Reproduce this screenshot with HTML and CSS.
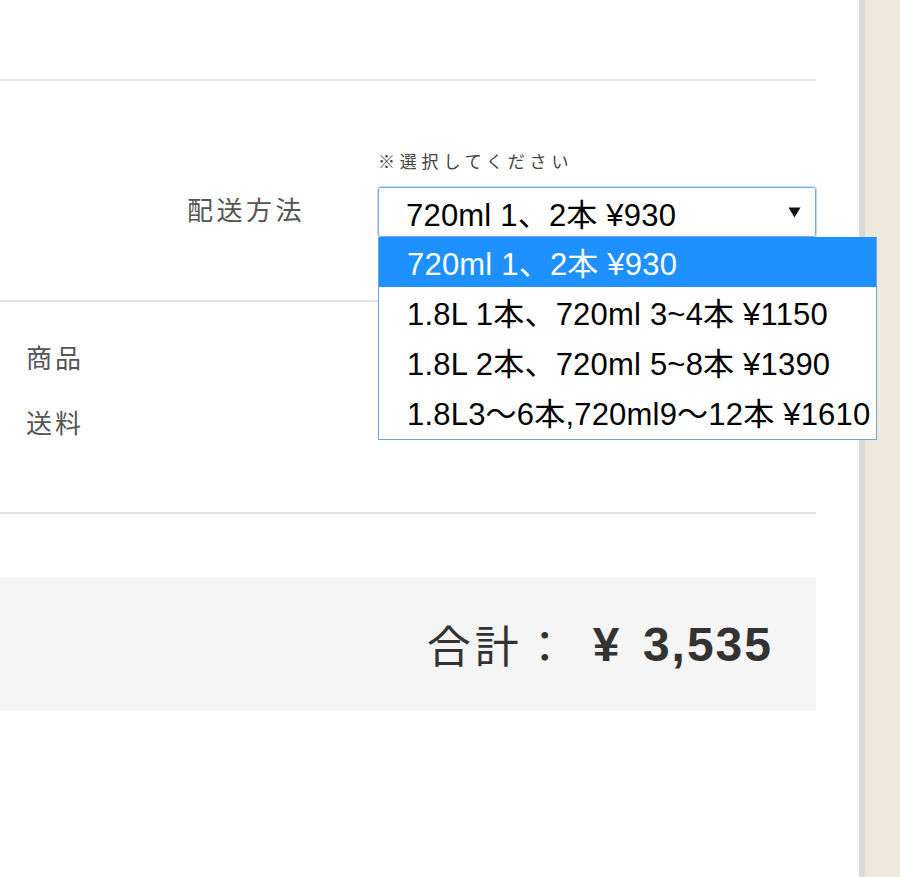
FILE: index.html
```html
<!doctype html>
<html lang="ja">
  <head>
    <meta charset="UTF-8" />
    <meta name="viewport" content="width=device-width, initial-scale=1" />
    <title>ご注文内容の確認</title>
    <link rel="stylesheet" href="styles.css">
  </head>
  <body>
    <main class="c-panel">
      <div class="c-panel__top"></div>

      <section class="c-shipping">
        <p class="c-shipping__note">※選択してください</p>
        <span class="c-shipping__label">配送方法</span>

        <div class="c-select">
          <div class="c-select__box">
            <span>720ml 1、2本 ¥930</span>
            <svg class="c-select__arrow" width="13" height="11" viewBox="0 0 13 11">
              <path d="M0.5 0.5 H12.5 L6.5 10.5 Z" fill="#111" />
            </svg>
          </div>

          <ul class="c-select__list">
            <li class="c-select__option c-select__option--active">720ml 1、2本 ¥930</li>
            <li class="c-select__option">1.8L 1本、720ml 3~4本 ¥1150</li>
            <li class="c-select__option">1.8L 2本、720ml 5~8本 ¥1390</li>
            <li class="c-select__option">1.8L3〜6本,720ml9〜12本 ¥1610</li>
          </ul>
        </div>
      </section>

      <section class="c-summary">
        <div class="c-summary__row">商品</div>
        <div class="c-summary__row">送料</div>
      </section>

      <div class="c-total">
        <span class="c-total__label">合計：</span>
        <span class="c-total__value">¥ 3,535</span>
      </div>
    </main>
  </body>
</html>
```

FILE: styles.css
```css
html {
  font-family: 'Liberation Sans', 'Noto Sans CJK JP', sans-serif;
}

body {
  margin: 0;
  min-height: 100vh;
  background-color: #efe8dc;
}

ul {
  margin: 0;
  padding: 0;
  list-style: none;
}

.c-panel {
  box-sizing: border-box;
  width: 865px;
  min-height: 100vh;
  padding-right: 43px;
  background-color: #fff;
  border-right: 6px solid #d9d9d9;
}

.c-panel__top {
  height: 79px;
  border-bottom: 2px solid #e3e3e3;
}

.c-shipping {
  display: grid;
  grid-template-columns: 305px 438px;
  column-gap: 73px;
  padding: 68px 0 63px;
  border-bottom: 2px solid #e3e3e3;
}

.c-shipping__note {
  grid-column: 2;
  margin: 0 0 14px;

  font-family: 'Noto Sans CJK JP', sans-serif;
  font-size: 17px;
  line-height: 24px;
  letter-spacing: 4.8px;
  color: #444;
}

.c-shipping__label {
  grid-column: 1;
  grid-row: 2;
  align-self: center;
  margin-top: -8px;
  text-align: right;

  font-family: 'Noto Sans CJK JP', sans-serif;
  font-size: 26px;
  letter-spacing: 3.5px;
  color: #555;
}

.c-select {
  position: relative;
  grid-column: 2;
  grid-row: 2;
}

.c-select__box {
  box-sizing: border-box;
  height: 50px;
  display: flex;
  align-items: center;
  justify-content: space-between;
  padding: 1px 14px 0 27px;

  font-size: 31px;
  letter-spacing: 0.2px;
  color: #000;
  border: 1px solid #7fa8e6;
  border-radius: 3px;
  box-shadow: 0 0 0 1px #c4d8f6;
}

.c-select__list {
  position: absolute;
  top: 50px;
  left: 0;
  z-index: 2;
  padding-bottom: 2px;

  white-space: nowrap;
  background-color: #fff;
  border: 1px solid #7b9fd8;
  border-top: 0;
}

.c-select__option {
  height: 50px;
  display: flex;
  align-items: center;
  padding: 0 6px 2px 28px;
  box-sizing: border-box;

  font-size: 31px;
  letter-spacing: 0.2px;
  color: #000;
}

.c-select__option--active {
  color: #fff;
  background-color: #1e90ff;
}

.c-summary {
  padding: 22px 0 58px 26px;
  border-bottom: 2px solid #e3e3e3;
}

.c-summary__row {
  height: 65px;
  display: flex;
  align-items: center;

  font-family: 'Noto Sans CJK JP', sans-serif;
  font-size: 26px;
  letter-spacing: 3px;
  color: #555;
}

.c-total {
  height: 134px;
  margin-top: 63px;
  display: flex;
  align-items: center;
  justify-content: flex-end;
  padding-right: 43px;

  color: #333;
  background-color: #f5f5f5;
}

.c-total__label {
  font-family: 'Noto Sans CJK JP', sans-serif;
  font-size: 44px;
  letter-spacing: 4px;
  margin-right: 22px;
}

.c-total__value {
  font-size: 48px;
  font-weight: 700;
  letter-spacing: 2px;
  word-spacing: 6px;
}
```
